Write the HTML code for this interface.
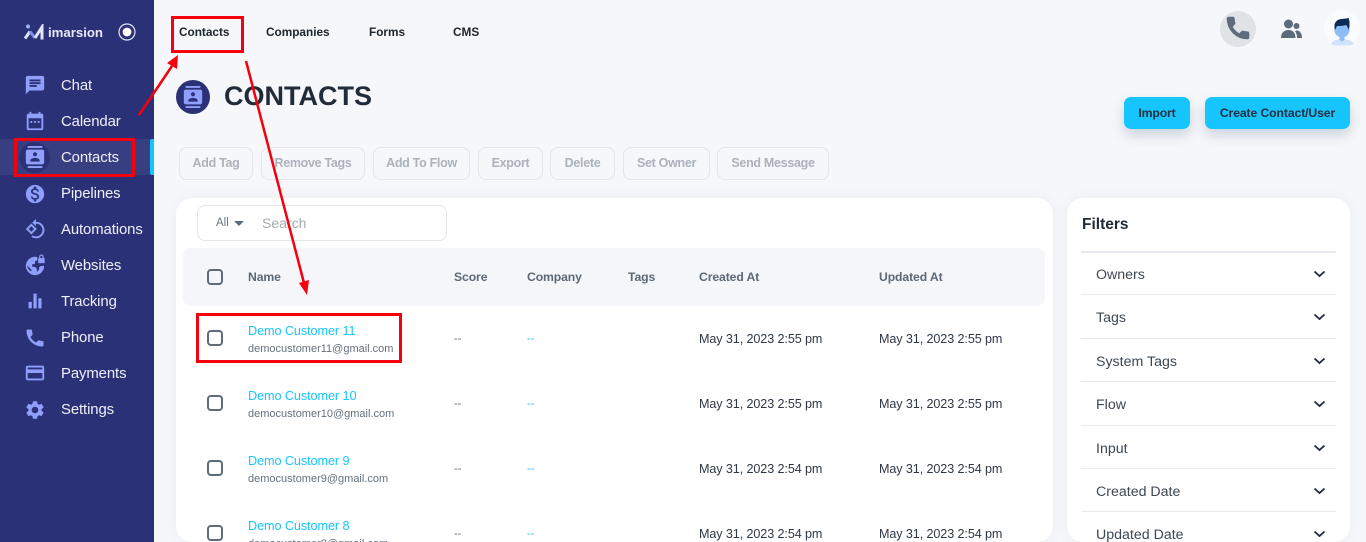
<!DOCTYPE html>
<html><head><meta charset="utf-8"><style>
*{box-sizing:border-box}
html,body{margin:0;padding:0;width:1366px;height:542px;overflow:hidden;background:#f5f7fa;font-family:"Liberation Sans",sans-serif;color:#222b38}
#wrap{position:relative;width:1366px;height:542px;overflow:hidden}
.a{position:absolute;white-space:nowrap;line-height:18px}
#side{position:absolute;left:0;top:0;width:154px;height:542px;background:#2a3176}
.nav{position:absolute;left:61px;color:#eef0fb;font-size:14.9px;line-height:20px;letter-spacing:-.1px}
.ic{position:absolute;left:24px;width:22px;height:22px;fill:#8f9ffb}
.top{font-size:11.8px;font-weight:bold;top:23px;color:#20262e}
.btn{position:absolute;top:147px;height:33px;border:1px solid #e3e6ea;border-radius:8px;background:#f5f7fa;color:#abb2bc;font-size:12.5px;font-weight:bold;text-align:center;line-height:31px;white-space:nowrap;letter-spacing:-.3px}
.cy{position:absolute;top:97px;height:32px;background:#17c5fe;border-radius:7px;color:#243040;font-size:12.2px;font-weight:bold;text-align:center;line-height:32px;box-shadow:0 6px 12px rgba(60,80,120,.22);letter-spacing:-.1px;white-space:nowrap}
.card{position:absolute;background:#fff;border-radius:16px;top:198px;height:344px;box-shadow:0 0 14px rgba(90,100,120,.06)}
.cb{position:absolute;left:207px;width:16px;height:16px;border:2px solid #5d6b7a;border-radius:4px}
.h{font-size:12.2px;font-weight:bold;top:268px;color:#5c6875;letter-spacing:-.1px}
.nm{left:248px;font-size:12.7px;color:#17c5fe;letter-spacing:-.1px}
.em{left:248px;font-size:11px;color:#66717d}
.t{font-size:12.6px;color:#2e3844;letter-spacing:-.1px}
.d{font-size:11px;color:#5c6875;left:454px}
.l{font-size:11px;color:#17c5fe;left:527px}
.f{left:1096px;font-size:14.2px;color:#3d4854}
.ln{position:absolute;left:1081px;width:255px;height:2px;background:#e6e9ee}
.ch{position:absolute;left:1313px;width:13px;height:8px;fill:none;stroke:#222b38;stroke-width:1.8}
.red{position:absolute;border:3px solid #f5000c}
</style></head><body><div id="wrap">
<div id="side">
<div style="position:absolute;left:0;top:139px;width:150px;height:36px;background:#383f81"></div>
<div style="position:absolute;left:150px;top:139px;width:4px;height:36px;background:#17c5fe;border-radius:2px 0 0 2px"></div>
<div style="position:absolute;left:19px;top:142px;width:31px;height:31px;border-radius:50%;background:#2a3176"></div>
<svg style="position:absolute;left:23px;top:24px" width="23" height="17" viewBox="0 0 23 17"><circle cx="5" cy="2.500" r="2" fill="#9fb0fb"/><path d="M2 14.500 7 7.500" fill="none" stroke="#dfe3fb" stroke-width="3"/><path d="M7 7.500 12 14" fill="none" stroke="#7c8ff5" stroke-width="3"/><path d="M12 14 19 3v12.500" fill="none" stroke="#dfe3fb" stroke-width="3"/></svg>
<div class="a" style="left:48px;top:24px;color:#e8eafa;font-size:13.200px;font-weight:bold">imarsion</div>
<svg style="position:absolute;left:118px;top:23px" width="18" height="18"><circle cx="9" cy="9" r="8" fill="none" stroke="#e6e8f8" stroke-width="1.200"/><circle cx="9" cy="9" r="4.400" fill="#fff"/></svg>
<svg class="ic" style="top:74px" viewBox="0 0 24 24"><path d="M20 2H4c-1.100 0-2 .9-2 2v18l4-4h14c1.100 0 2-.9 2-2V4c0-1.100-.9-2-2-2zM6 9h12v2H6V9zm8 5H6v-2h8v2zm4-6H6V6h12v2z"/></svg>
<svg class="ic" style="top:110px" viewBox="0 0 24 24"><path d="M19 4h-1V2h-2v2H8V2H6v2H5a2 2 0 0 0-2 2v14a2 2 0 0 0 2 2h14a2 2 0 0 0 2-2V6a2 2 0 0 0-2-2zm0 16H5V9h14zM7 12h2v2H7zm4 0h2v2h-2zm4 0h2v2h-2z"/></svg>
<svg class="ic" style="top:146px" viewBox="0 0 24 24"><path d="M20 0H4v2h16V0zM4 24h16v-2H4v2zM20 4H4c-1.100 0-2 .9-2 2v12c0 1.100.9 2 2 2h16c1.100 0 2-.9 2-2V6c0-1.100-.9-2-2-2zm-8 2.750c1.240 0 2.250 1.010 2.250 2.250s-1.010 2.250-2.250 2.250S9.750 10.240 9.750 9 10.760 6.750 12 6.750zM17 17H7v-1.500c0-1.670 3.330-2.500 5-2.500s5 .83 5 2.500V17z"/></svg>
<svg class="ic" style="top:183px" viewBox="0 0 24 24"><path d="M12 2C6.480 2 2 6.480 2 12s4.480 10 10 10 10-4.480 10-10S17.520 2 12 2zm1.410 16.090V20h-2.670v-1.930c-1.710-.36-3.160-1.460-3.270-3.400h1.960c.1 1.050.82 1.870 2.650 1.870 1.960 0 2.400-.98 2.400-1.590 0-.83-.44-1.610-2.670-2.140-2.480-.6-4.180-1.620-4.180-3.670 0-1.720 1.390-2.840 3.110-3.210V4h2.670v1.950c1.860.45 2.790 1.860 2.870 3.390H14.300c-.05-1.110-.64-1.870-2.220-1.870-1.500 0-2.400.68-2.400 1.640 0 .84.65 1.390 2.670 1.910s4.180 1.390 4.180 3.910c-.01 1.830-1.380 2.830-3.120 3.160z"/></svg>
<svg class="ic" style="top:218px" viewBox="0 0 24 24"><path d="M8 6 2 12l6 6 6-6-6-6zm0 3 3 3-3 3-3-3 3-3z"/><path d="M13 1v3.100A9 9 0 1 1 8 20.400l1.400-1.400A7 7 0 1 0 13 6.100V9L9 5z"/></svg>
<svg class="ic" style="top:254px" viewBox="0 0 24 24"><path d="M11.500 3a10 10 0 1 0 10.500 10h-3.500l-2 1.500V17l-2.500 2.500V16l-2-2H9v-3h3V8l2.500-1V3.400a10 10 0 0 0-3-.4zM3.500 12.500 8 17v2a8 8 0 0 1-4.500-6.500z"/><path d="M16.500 4.500V3a2.500 2.500 0 0 1 5 0v1.500h1V10h-7V4.500zm1.300 0h2.400V3a1.200 1.200 0 0 0-2.400 0z"/></svg>
<svg class="ic" style="top:290px" viewBox="0 0 24 24"><path d="M5 13h3.500v7H5zM10.300 4h3.500v16h-3.500zM15.600 9h3.500v11h-3.500z"/></svg>
<svg class="ic" style="top:327px;stroke:#8f9ffb;stroke-width:.6" viewBox="0 0 24 24"><path d="M6.620 10.790c1.440 2.830 3.760 5.140 6.590 6.590l2.200-2.200c.27-.27.67-.36 1.020-.24 1.120.37 2.330.57 3.570.57.55 0 1 .45 1 1V20c0 .55-.45 1-1 1-9.390 0-17-7.610-17-17 0-.55.45-1 1-1h3.500c.55 0 1 .45 1 1 0 1.250.2 2.450.57 3.570.11.350.03.740-.25 1.020l-2.200 2.200z"/></svg>
<svg class="ic" style="top:362px" viewBox="0 0 24 24"><path d="M20 4H4c-1.110 0-1.990.89-1.990 2L2 18c0 1.110.89 2 2 2h16c1.110 0 2-.89 2-2V6c0-1.110-.89-2-2-2zm0 14H4v-6h16v6zm0-10H4V6h16v2z"/></svg>
<svg class="ic" style="top:399px" viewBox="0 0 24 24"><path d="M19.140 12.940c.04-.3.06-.61.06-.94 0-.32-.02-.64-.07-.94l2.030-1.580c.18-.14.23-.41.12-.61l-1.920-3.320c-.12-.22-.37-.29-.59-.22l-2.390.96c-.5-.38-1.030-.7-1.620-.94l-.36-2.540c-.04-.24-.24-.41-.48-.41h-3.840c-.24 0-.43.17-.47.41l-.36 2.540c-.59.24-1.130.57-1.620.94l-2.390-.96c-.22-.08-.47 0-.59.22L2.740 8.870c-.12.21-.08.47.12.61l2.030 1.580c-.05.3-.09.63-.09.94s.02.64.07.94l-2.030 1.580c-.18.14-.23.41-.12.61l1.920 3.320c.12.22.37.29.59.22l2.390-.96c.5.38 1.030.7 1.620.94l.36 2.540c.05.24.24.41.48.41h3.840c.24 0 .44-.17.47-.41l.36-2.540c.59-.24 1.130-.56 1.620-.94l2.390.96c.22.08.47 0 .59-.22l1.920-3.320c.12-.22.07-.47-.12-.61l-2.010-1.580zM12 15.600c-1.980 0-3.600-1.620-3.600-3.600s1.620-3.600 3.600-3.600 3.600 1.620 3.600 3.600-1.620 3.600-3.600 3.600z"/></svg>
<div class="nav" style="top:76px">Chat</div>
<div class="nav" style="top:112px">Calendar</div>
<div class="nav" style="top:148px">Contacts</div>
<div class="nav" style="top:184px">Pipelines</div>
<div class="nav" style="top:220px">Automations</div>
<div class="nav" style="top:256px">Websites</div>
<div class="nav" style="top:292px">Tracking</div>
<div class="nav" style="top:328px">Phone</div>
<div class="nav" style="top:364px">Payments</div>
<div class="nav" style="top:400px">Settings</div>
</div>

<div class="a top" style="left:179px">Contacts</div>
<div class="a top" style="left:266px">Companies</div>
<div class="a top" style="left:369px">Forms</div>
<div class="a top" style="left:453px">CMS</div>

<div style="position:absolute;left:1220px;top:11px;width:36px;height:36px;border-radius:50%;background:#dfe2e7"></div>
<svg style="position:absolute;left:1224px;top:14px;fill:#5d6b7a;stroke:#5d6b7a;stroke-width:1.300;stroke-linejoin:round" width="28" height="28" viewBox="0 0 24 24"><path d="M6.620 10.790c1.440 2.830 3.760 5.140 6.590 6.590l2.200-2.200c.27-.27.67-.36 1.020-.24 1.120.37 2.330.57 3.570.57.55 0 1 .45 1 1V20c0 .55-.45 1-1 1-9.390 0-17-7.610-17-17 0-.55.45-1 1-1h3.500c.55 0 1 .45 1 1 0 1.250.2 2.450.57 3.570.11.350.03.740-.25 1.020l-2.200 2.200z"/></svg>
<svg style="position:absolute;left:1280px;top:18px;fill:#5d6b7a" width="23" height="21" viewBox="0 0 23 21"><circle cx="8.500" cy="6" r="4.500"/><circle cx="16.500" cy="8" r="3"/><path d="M1 20c0-5 3-8 7.500-8s7 3 7 8zM16.500 12.500c3.500 0 5.500 3 5.500 7.500h-5c0-3-.5-5-2-6.800z"/></svg>
<div style="position:absolute;left:1324px;top:10px;width:36px;height:36px;border-radius:50%;background:#fafbfd"></div>
<svg style="position:absolute;left:1327px;top:17px" width="30" height="29" viewBox="0 0 30 29"><path d="M4 27c2-4 7-5 11-5s9 1 12 5c-3 1.500-8 1.500-12 1.500S7 28.500 4 27z" fill="#cfe3fb"/><path d="M12.500 17h5v6l-2.500 1.500-2.500-1.500z" fill="#8dbdf8"/><circle cx="15" cy="13" r="7.500" fill="#8dbdf8"/><path d="M8 13c-1.500-5 0-9 4-10.500 3-1 6-.5 10-1.500-.5 1.200 0 2.300.5 3v6L21 13c0-2-.5-4-2-5-3 1-6 1-9 1z" fill="#0f2a55"/></svg>

<div style="position:absolute;left:176px;top:80px;width:34px;height:34px;border-radius:50%;background:#2a3176"></div>
<svg style="position:absolute;left:182px;top:85px;fill:#8f9ffb" width="22" height="24" viewBox="0 0 24 24"><path d="M20 0H4v2h16V0zM4 24h16v-2H4v2zM20 4H4c-1.100 0-2 .9-2 2v12c0 1.100.9 2 2 2h16c1.100 0 2-.9 2-2V6c0-1.100-.9-2-2-2zm-8 2.750c1.240 0 2.250 1.010 2.250 2.250s-1.010 2.250-2.250 2.250S9.750 10.240 9.750 9 10.760 6.750 12 6.750zM17 17H7v-1.500c0-1.670 3.330-2.500 5-2.500s5 .83 5 2.500V17z"/></svg>
<div class="a" style="left:224px;top:78px;font-size:27px;line-height:36px;font-weight:bold;color:#222b38">CONTACTS</div>

<div class="cy" style="left:1124px;width:66px">Import</div>
<div class="cy" style="left:1205px;width:145px">Create Contact/User</div>

<div class="btn" style="left:179px;width:74px">Add Tag</div>
<div class="btn" style="left:261px;width:104px">Remove Tags</div>
<div class="btn" style="left:373px;width:97px">Add To Flow</div>
<div class="btn" style="left:478px;width:65px">Export</div>
<div class="btn" style="left:550px;width:65px">Delete</div>
<div class="btn" style="left:623px;width:87px">Set Owner</div>
<div class="btn" style="left:717px;width:112px">Send Message</div>

<div class="card" style="left:176px;width:877px"></div>
<div class="card" style="left:1067px;width:283px"></div>

<div style="position:absolute;left:197px;top:205px;width:250px;height:36px;border:1px solid #e3e6ea;border-radius:8px;background:#fff"></div>
<div class="a" style="left:216px;top:214px;font-size:11.500px;color:#6b7683">All</div>
<div style="position:absolute;left:234px;top:221px;border:5px solid transparent;border-top-color:#5d6b7a;border-bottom:0"></div>
<div class="a" style="left:262px;top:214px;font-size:14px;color:#a4abb5">Search</div>

<div style="position:absolute;left:183px;top:248px;width:862px;height:58px;background:#f4f6f9;border-radius:8px"></div>
<div class="cb" style="top:269px"></div>
<div class="a h" style="left:248px">Name</div>
<div class="a h" style="left:454px">Score</div>
<div class="a h" style="left:527px">Company</div>
<div class="a h" style="left:628px">Tags</div>
<div class="a h" style="left:699px">Created At</div>
<div class="a h" style="left:879px">Updated At</div>

<div class="cb" style="top:330px"></div><div class="a nm" style="top:322px">Demo Customer 11</div><div class="a em" style="top:340px">democustomer11@gmail.com</div><div class="a d" style="top:330px">--</div><div class="a l" style="top:330px">--</div><div class="a t" style="left:699px;top:330px">May 31, 2023 2:55 pm</div><div class="a t" style="left:879px;top:330px">May 31, 2023 2:55 pm</div>
<div class="cb" style="top:395px"></div><div class="a nm" style="top:387px">Demo Customer 10</div><div class="a em" style="top:405px">democustomer10@gmail.com</div><div class="a d" style="top:395px">--</div><div class="a l" style="top:395px">--</div><div class="a t" style="left:699px;top:395px">May 31, 2023 2:55 pm</div><div class="a t" style="left:879px;top:395px">May 31, 2023 2:55 pm</div>
<div class="cb" style="top:460px"></div><div class="a nm" style="top:452px">Demo Customer 9</div><div class="a em" style="top:470px">democustomer9@gmail.com</div><div class="a d" style="top:460px">--</div><div class="a l" style="top:460px">--</div><div class="a t" style="left:699px;top:460px">May 31, 2023 2:54 pm</div><div class="a t" style="left:879px;top:460px">May 31, 2023 2:54 pm</div>
<div class="cb" style="top:525px"></div><div class="a nm" style="top:517px">Demo Customer 8</div><div class="a em" style="top:535px">democustomer8@gmail.com</div><div class="a d" style="top:525px">--</div><div class="a l" style="top:525px">--</div><div class="a t" style="left:699px;top:525px">May 31, 2023 2:54 pm</div><div class="a t" style="left:879px;top:525px">May 31, 2023 2:54 pm</div>

<div class="a" style="left:1082px;top:216px;font-size:15.500px;font-weight:bold;color:#222b38">Filters</div>
<div class="ln" style="top:251px"></div>
<div class="a f" style="top:266px">Owners</div><svg class="ch" style="top:270px" viewBox="0 0 13 8"><path d="M1.500 1.500 6.500 6l5-4.500"/></svg>
<div class="ln" style="top:294px;height:1px"></div>
<div class="a f" style="top:309px">Tags</div><svg class="ch" style="top:313px" viewBox="0 0 13 8"><path d="M1.500 1.500 6.500 6l5-4.500"/></svg>
<div class="ln" style="top:338px;height:1px"></div>
<div class="a f" style="top:353px">System Tags</div><svg class="ch" style="top:357px" viewBox="0 0 13 8"><path d="M1.500 1.500 6.500 6l5-4.500"/></svg>
<div class="ln" style="top:381px;height:1px"></div>
<div class="a f" style="top:396px">Flow</div><svg class="ch" style="top:400px" viewBox="0 0 13 8"><path d="M1.500 1.500 6.500 6l5-4.500"/></svg>
<div class="ln" style="top:425px;height:1px"></div>
<div class="a f" style="top:440px">Input</div><svg class="ch" style="top:444px" viewBox="0 0 13 8"><path d="M1.500 1.500 6.500 6l5-4.500"/></svg>
<div class="ln" style="top:468px;height:1px"></div>
<div class="a f" style="top:483px">Created Date</div><svg class="ch" style="top:487px" viewBox="0 0 13 8"><path d="M1.500 1.500 6.500 6l5-4.500"/></svg>
<div class="ln" style="top:511px;height:1px"></div>
<div class="a f" style="top:526px">Updated Date</div><svg class="ch" style="top:530px" viewBox="0 0 13 8"><path d="M1.500 1.500 6.500 6l5-4.500"/></svg>

<div class="red" style="left:14px;top:138px;width:121px;height:39px"></div>
<div class="red" style="left:171px;top:16px;width:73px;height:37px"></div>
<div class="red" style="left:196px;top:313px;width:206px;height:50px"></div>
<svg style="position:absolute;left:0;top:0" width="1366" height="542"><g stroke="#f5000c" stroke-width="2.500" fill="#f5000c"><line x1="139" y1="115" x2="172" y2="66"/><path stroke="none" d="M178 55 177 69 167 63z"/><line x1="246" y1="61" x2="304" y2="283"/><path stroke="none" d="M307 295 299 283 309 280z"/></g></svg>
</div></body></html>
